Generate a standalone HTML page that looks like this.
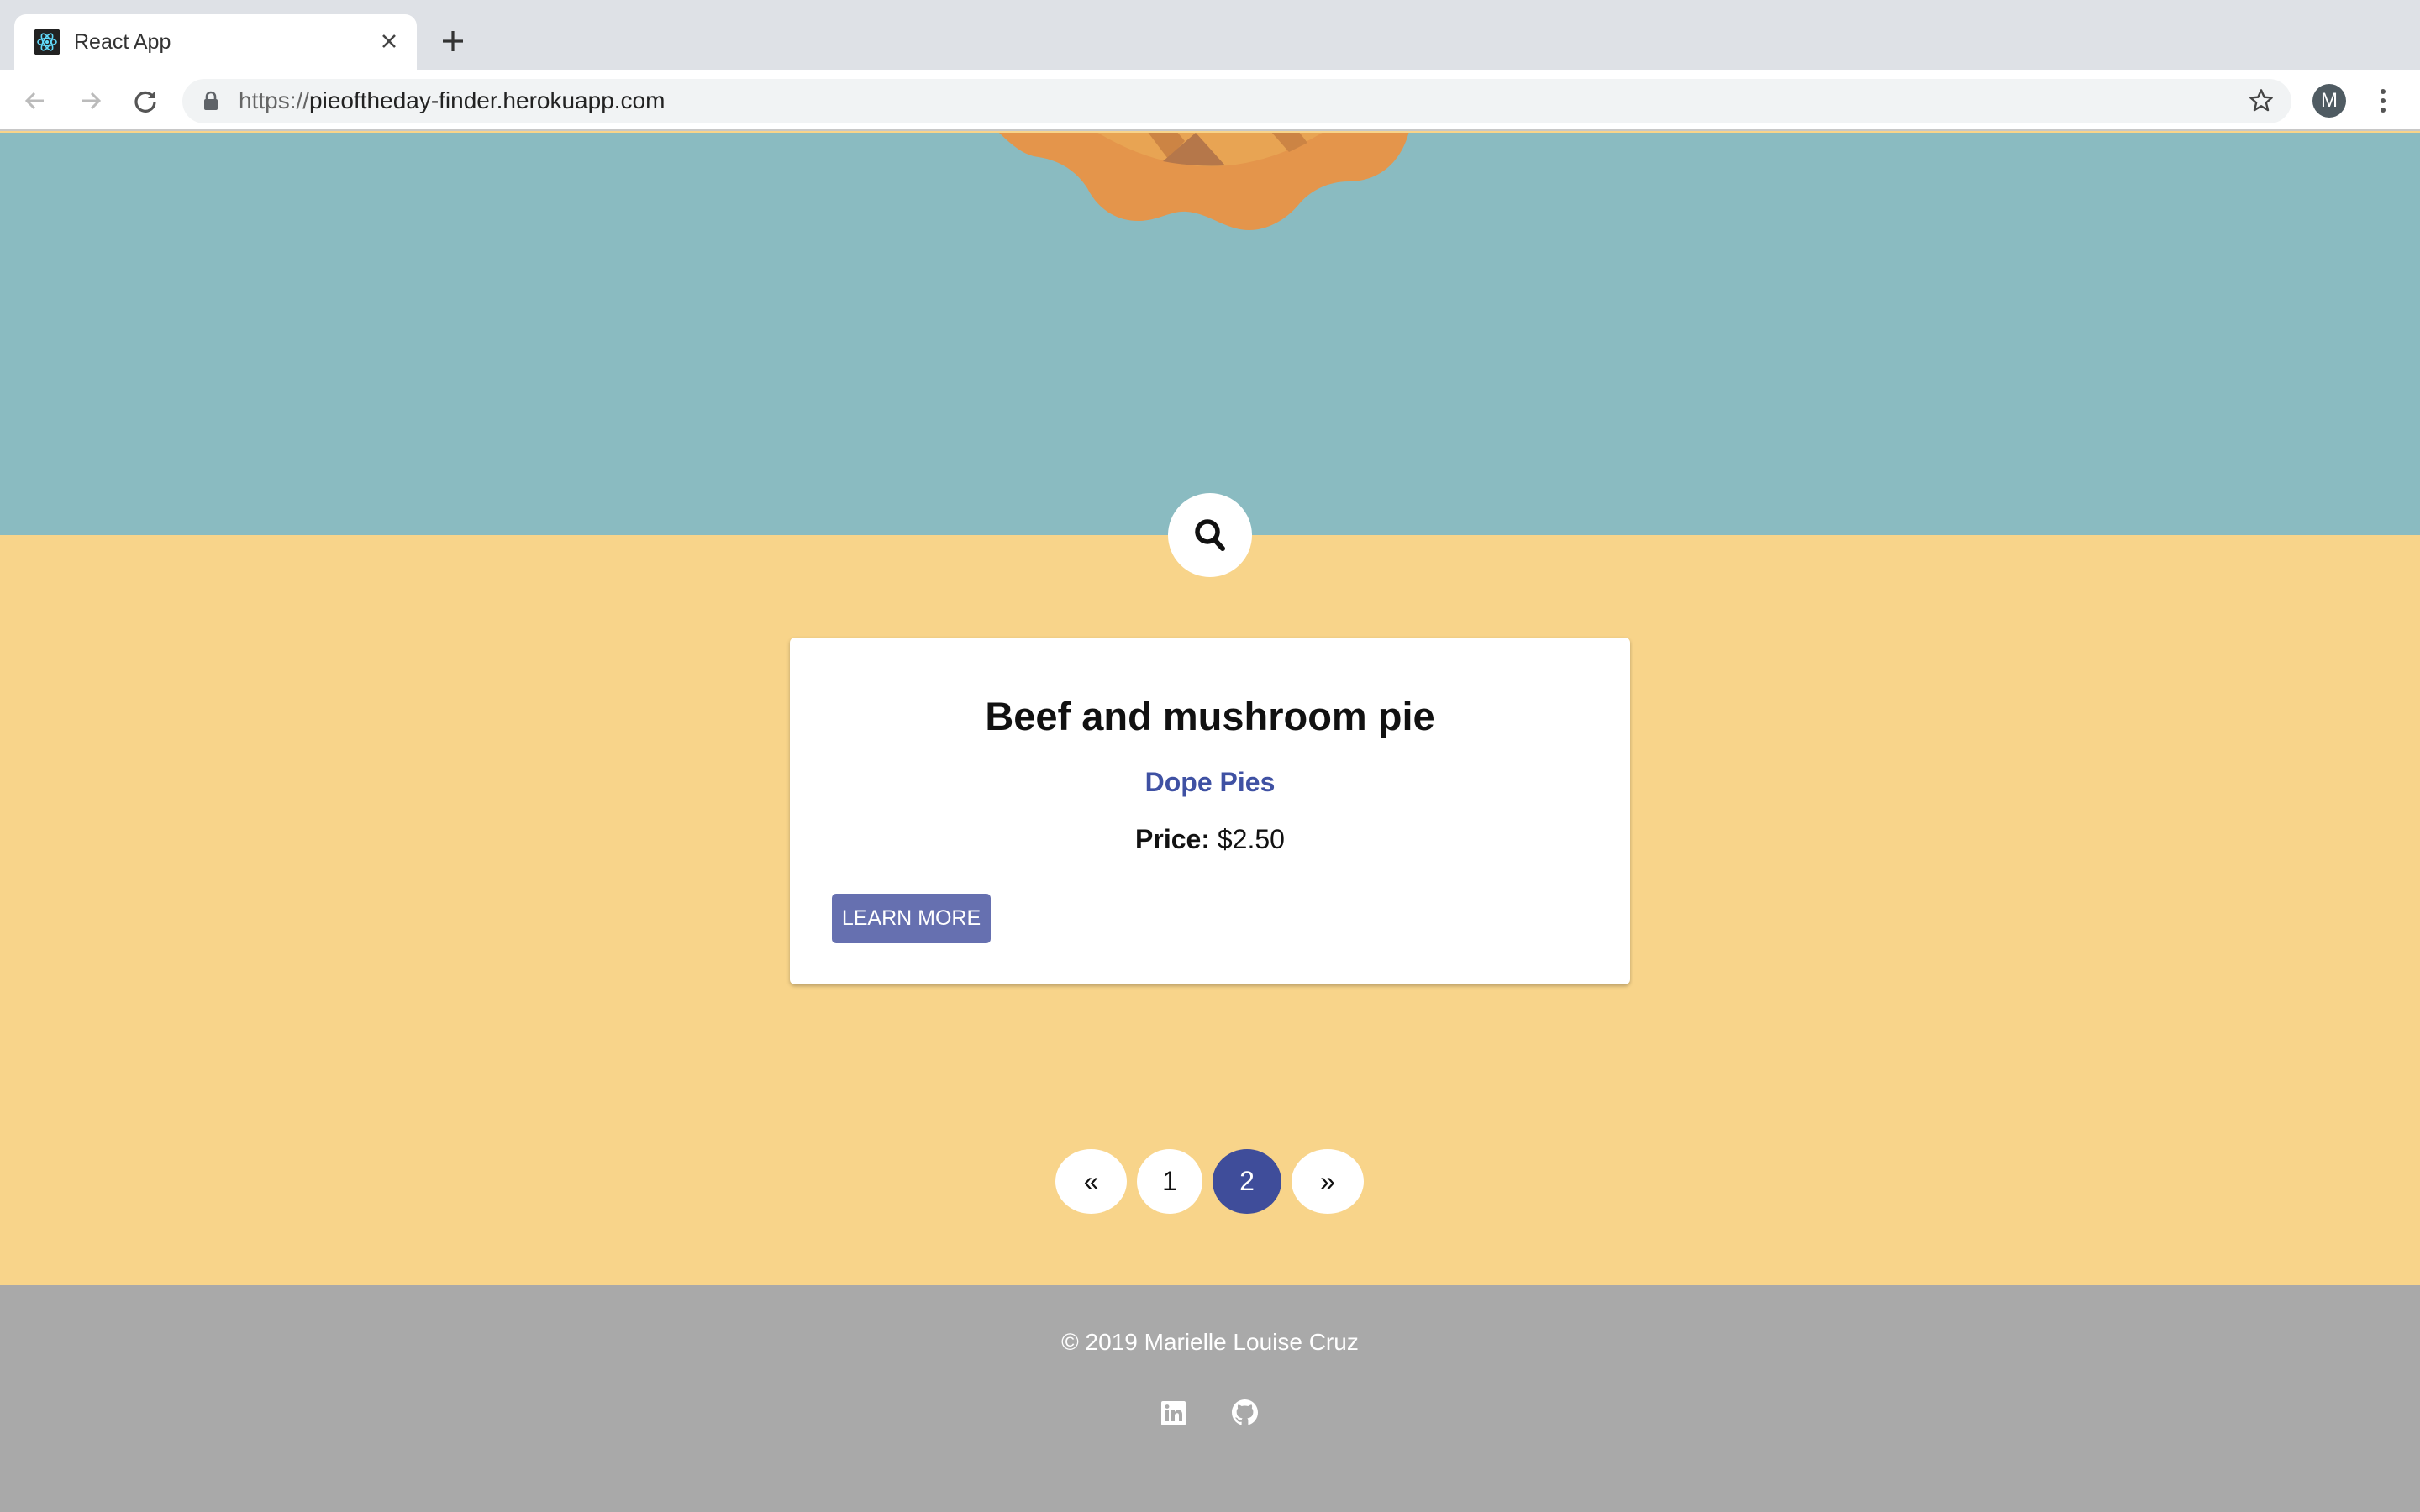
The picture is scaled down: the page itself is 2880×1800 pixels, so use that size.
<!DOCTYPE html>
<html><head><meta charset="utf-8"><style>
*{margin:0;padding:0;box-sizing:border-box}
body{width:2880px;height:1800px;overflow:hidden;font-family:"Liberation Sans",sans-serif;position:relative;background:#f8d48a}
.abs{position:absolute}
</style></head><body>
<!-- chrome -->
<div class="abs" style="left:0;top:0;width:2880px;height:83px;background:#dee1e6"></div>
<div class="abs" style="left:17px;top:17px;width:479px;height:70px;background:#fff;border-radius:14px 14px 0 0"></div>
<div class="abs" style="left:40px;top:34px;width:32px;height:32px;background:#222;border-radius:5px"></div>
<svg class="abs" style="left:40px;top:34px" width="32" height="32" viewBox="0 0 32 32"><g fill="none" stroke="#61dafb" stroke-width="1.6"><ellipse cx="16" cy="16" rx="11" ry="4.3"/><ellipse cx="16" cy="16" rx="11" ry="4.3" transform="rotate(60 16 16)"/><ellipse cx="16" cy="16" rx="11" ry="4.3" transform="rotate(120 16 16)"/></g><circle cx="16" cy="16" r="2" fill="#61dafb"/></svg>
<div class="abs" style="left:88px;top:34px;font-size:25px;color:#333;line-height:32px">React App</div>
<svg class="abs" style="left:452px;top:38px" width="22" height="22" viewBox="0 0 22 22"><path d="M4 4L18 18M18 4L4 18" stroke="#444" stroke-width="2.6"/></svg>
<svg class="abs" style="left:525px;top:35px" width="28" height="28" viewBox="0 0 28 28"><path d="M14 2V26M2 14H26" stroke="#333" stroke-width="3.2"/></svg>
<div class="abs" style="left:0;top:83px;width:2880px;height:73px;background:#fff;border-bottom:2px solid #c8c8c8"></div>
<svg class="abs" style="left:26px;top:104px" width="32" height="32" viewBox="0 0 32 32"><path d="M26 16H7M15 7L6 16L15 25" fill="none" stroke="#bbb" stroke-width="3"/></svg>
<svg class="abs" style="left:92px;top:104px" width="32" height="32" viewBox="0 0 32 32"><path d="M6 16H25M17 7L26 16L17 25" fill="none" stroke="#bbb" stroke-width="3"/></svg>
<svg class="abs" style="left:156px;top:103px" width="34" height="34" viewBox="0 0 34 34"><path d="M26 12A11 11 0 1 0 28 19" fill="none" stroke="#555" stroke-width="3.2"/><path d="M29 5V14H20Z" fill="#555"/></svg>
<div class="abs" style="left:217px;top:94px;width:2510px;height:53px;background:#f1f3f4;border-radius:27px"></div>
<svg class="abs" style="left:241px;top:108px" width="20" height="24" viewBox="0 0 20 24"><rect x="2" y="10" width="16" height="13" rx="2" fill="#5f6368"/><path d="M5 11V7A5 5 0 0 1 15 7V11" fill="none" stroke="#5f6368" stroke-width="2.6"/></svg>
<div class="abs" style="left:284px;top:103px;font-size:28px;line-height:34px;color:#222"><span style="color:#666">https://</span>pieoftheday-finder.herokuapp.com</div>
<svg class="abs" style="left:2675px;top:104px" width="32" height="32" viewBox="0 0 24 24"><path d="M12 2.5L14.8 8.8L21.5 9.3L16.4 13.7L18 20.3L12 16.7L6 20.3L7.6 13.7L2.5 9.3L9.2 8.8Z" fill="none" stroke="#444" stroke-width="1.8" stroke-linejoin="round"/></svg>
<div class="abs" style="left:2752px;top:100px;width:40px;height:40px;border-radius:50%;background:#4f5b62;color:#fff;font-size:24px;text-align:center;line-height:40px">M</div>
<svg class="abs" style="left:2826px;top:102px" width="20" height="36" viewBox="0 0 20 36"><circle cx="10" cy="7" r="3" fill="#555"/><circle cx="10" cy="18" r="3" fill="#555"/><circle cx="10" cy="29" r="3" fill="#555"/></svg>
<!-- teal hero -->
<div class="abs" style="left:0;top:158px;width:2880px;height:479px;background:#8abbc1;overflow:hidden">
<svg class="abs" style="left:0;top:-158px" width="2880" height="637" viewBox="0 0 2880 637">
<path d="M1187,156 C1203,172 1218,185 1236,187 C1268,192 1285,210 1294,224 C1308,252 1333,264 1357,263 C1380,262 1392,251 1412,252 C1440,254 1458,274 1487,274 C1510,274 1532,260 1546,243 C1560,226 1582,216 1605,216 C1648,216 1670,185 1677,156 Z" fill="#e4954b"/>
<path d="M1303,156 Q1440,240 1577,156 Z" fill="#e8a453"/>
<path d="M1365,156 L1390,189 L1410,168 L1400,156 Z" fill="#cc8444"/>
<path d="M1512,156 L1534,181 L1556,170 L1545,156 Z" fill="#cc8444"/>
<path d="M1423,158 L1384,192 Q1420,199 1458,197 Z" fill="#b5774a"/>
</svg>
</div>
<!-- search -->
<div class="abs" style="left:1390px;top:587px;width:100px;height:100px;border-radius:50%;background:#fff"></div>
<svg class="abs" style="left:1418px;top:614px" width="46" height="46" viewBox="0 0 46 46"><circle cx="19" cy="19" r="12" fill="none" stroke="#111" stroke-width="5.5"/><path d="M27 28L37 39" stroke="#111" stroke-width="6" stroke-linecap="round"/></svg>
<!-- card -->
<div class="abs" style="left:940px;top:759px;width:1000px;height:413px;background:#fff;border-radius:6px;box-shadow:0 2px 4px rgba(0,0,0,.25)"></div>
<div class="abs" style="left:940px;top:825px;width:1000px;text-align:center;font-size:47px;font-weight:bold;color:#111;line-height:56px">Beef and mushroom pie</div>
<div class="abs" style="left:940px;top:911px;width:1000px;text-align:center;font-size:32px;font-weight:bold;color:#3f51a3;line-height:40px">Dope Pies</div>
<div class="abs" style="left:940px;top:979px;width:1000px;text-align:center;font-size:32px;color:#111;line-height:40px"><b>Price:</b> $2.50</div>
<div class="abs" style="left:990px;top:1064px;width:189px;height:59px;background:#6670b0;border-radius:5px;color:#fff;font-size:25px;text-align:center;line-height:59px">LEARN MORE</div>
<!-- pagination -->
<div class="abs" style="left:1256px;top:1368px;width:85px;height:77px;border-radius:50%;background:#fff;text-align:center;line-height:77px;font-size:32px;color:#111">«</div>
<div class="abs" style="left:1353px;top:1368px;width:78px;height:77px;border-radius:50%;background:#fff;text-align:center;line-height:77px;font-size:32px;color:#111">1</div>
<div class="abs" style="left:1443px;top:1368px;width:82px;height:77px;border-radius:50%;background:#3f4d9a;text-align:center;line-height:77px;font-size:32px;color:#fff">2</div>
<div class="abs" style="left:1537px;top:1368px;width:86px;height:77px;border-radius:50%;background:#fff;text-align:center;line-height:77px;font-size:32px;color:#111">»</div>
<!-- footer -->
<div class="abs" style="left:0;top:1530px;width:2880px;height:270px;background:#a9a9a9"></div>
<div class="abs" style="left:0;top:1581px;width:2880px;text-align:center;font-size:28px;color:#fff;line-height:34px">© 2019 Marielle Louise Cruz</div>
<svg class="abs" style="left:1382px;top:1668px" width="29" height="29" viewBox="0 0 29 29"><rect width="29" height="29" rx="2" fill="#fff"/><rect x="5" y="11" width="4" height="13" fill="#a9a9a9"/><circle cx="7" cy="6.5" r="2.4" fill="#a9a9a9"/><path d="M12 11H16V13C17 11 19 10.6 20.5 10.6C23.5 10.6 25 12.5 25 16V24H21V17C21 15 20.3 14.3 19 14.3C17.2 14.3 16 15.5 16 17.5V24H12Z" fill="#a9a9a9"/></svg>
<svg class="abs" style="left:1466px;top:1666px" width="31" height="31" viewBox="0 0 16 16"><path fill="#fff" d="M8 0C3.58 0 0 3.58 0 8c0 3.54 2.29 6.53 5.47 7.59.4.07.55-.17.55-.38 0-.19-.01-.82-.01-1.49-2.01.37-2.53-.49-2.69-.94-.09-.23-.48-.94-.82-1.130-.28-.15-.68-.52-.01-.53.63-.01 1.08.58 1.23.82.72 1.21 1.87.87 2.33.66.07-.52.28-.87.51-1.07-1.78-.2-3.64-.89-3.64-3.95 0-.87.31-1.59.82-2.15-.08-.2-.36-1.02.08-2.12 0 0 .67-.21 2.2.82.64-.18 1.32-.27 2-.27.68 0 1.36.09 2 .27 1.53-1.04 2.2-.82 2.2-.82.44 1.1.16 1.92.08 2.12.51.56.82 1.27.82 2.15 0 3.07-1.87 3.75-3.65 3.95.29.25.54.73.54 1.48 0 1.07-.01 1.93-.01 2.2 0 .21.15.46.55.38A8.013 8.013 0 0016 8c0-4.42-3.58-8-8-8z"/></svg>
</body></html>
